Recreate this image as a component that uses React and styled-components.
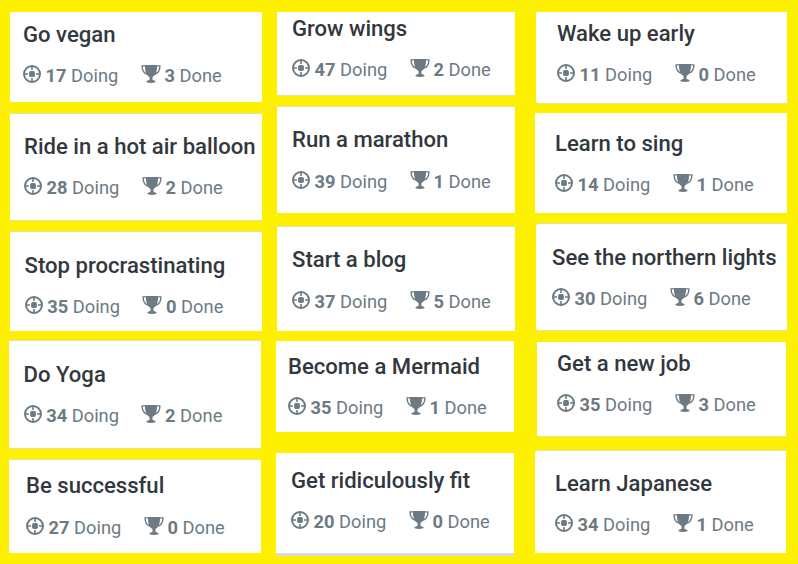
import React from 'react';
import styled, { createGlobalStyle } from 'styled-components';

const GlobalStyle = createGlobalStyle`
  body {
    margin: 0;
    background: #fdf000;
  }
`

const Board = styled.main`
  box-sizing: border-box;
  display: grid;
  grid-template-columns: 267px 258px 273px;
  width: 798px;
  height: 564px;
  overflow: hidden;
  background: #fdf000;
  font-family: Roboto, "Liberation Sans", sans-serif;
`

const Column = styled.section`
  display: flex;
  flex-direction: column;
  align-items: flex-start;
`

const Card = styled.article`
  box-sizing: border-box;
  flex: none;
  width: ${props => props.$width}px;
  height: ${props => props.$height}px;
  margin-top: ${props => props.$gap}px;
  margin-left: ${props => props.$left}px;
  padding: ${props => props.$padTop}px 0 0 ${props => props.$padLeft}px;
  background: #fff;
  border-radius: ${props => props.$radius || '0'};
  box-shadow: ${props => props.$edge || 'none'};
`

const Title = styled.h2`
  margin: 0 0 ${props => props.$space}px;
  color: #32383e;
  font-size: 22.1px;
  font-weight: 500;
  line-height: 24px;
  white-space: nowrap;
`

const Stats = styled.div`
  display: flex;
  height: 22px;
`

const Stat = styled.div`
  display: flex;
  width: ${props => props.$wide ? '117.7px' : 'auto'};
  color: #6c7b83;
  font-size: 18.3px;
  line-height: 22px;
  white-space: pre;
`

const Icon = styled.svg`
  flex: none;
  width: ${props => props.$width}px;
  height: 18px;
  margin-right: ${props => props.$space}px;
`

const Count = styled.strong`
  font-weight: 700;
`

// pale hairlines on the card edges
const top = '0 -1px #e6e3a0';
const bottom = '0 1px #e6e3a0';
const both = `${top}, ${bottom}`;

const columns = [
  [
    { title: 'Go vegan', doing: 17, done: 3, left: 10, gap: 12, width: 252, height: 90, padTop: 10, padLeft: 13 },
    { title: 'Ride in a hot air balloon', doing: 28, done: 2, left: 10, gap: 12, width: 252, height: 106, padTop: 20, padLeft: 14, edge: both },
    { title: 'Stop procrastinating', doing: 35, done: 0, left: 10, gap: 12, width: 252, height: 99, padTop: 21, padLeft: 14.6, edge: top },
    { title: 'Do Yoga', doing: 34, done: 2, left: 9, gap: 10, width: 252, height: 107, padTop: 21, padLeft: 14.6, edge: both },
    { title: 'Be successful', doing: 27, done: 0, left: 9, gap: 12, width: 252, height: 93, padTop: 13, padLeft: 17, space: 20, edge: top },
  ],
  [
    { title: 'Grow wings', doing: 47, done: 2, left: 10, gap: 12, width: 238, height: 83, padTop: 4, padLeft: 15, edge: bottom },
    { title: 'Run a marathon', doing: 39, done: 1, left: 10, gap: 12, width: 238, height: 106, padTop: 20, padLeft: 15, space: 20, edge: top },
    { title: 'Start a blog', doing: 37, done: 5, left: 10, gap: 14, width: 238, height: 104, padTop: 20, padLeft: 15, space: 20, edge: top },
    { title: 'Become a Mermaid', doing: 35, done: 1, left: 9, gap: 10, width: 238, height: 91, padTop: 13, padLeft: 12 },
    { title: 'Get ridiculously fit', doing: 20, done: 0, left: 9, gap: 21, width: 238, height: 100, padTop: 15, padLeft: 15, edge: '0 3px #dddbd9' },
  ],
  [
    { title: 'Wake up early', doing: 11, done: 0, left: 11, gap: 12, width: 251, height: 91, padTop: 9, padLeft: 21, radius: '0 0 0 3px', edge: bottom },
    { title: 'Learn to sing', doing: 14, done: 1, left: 10, gap: 10, width: 252, height: 100, padTop: 18, padLeft: 20 },
    { title: 'See the northern lights', doing: 30, done: 6, left: 11, gap: 11, width: 251, height: 106, padTop: 21, padLeft: 16, radius: '3px 0 0 3px', edge: both },
    { title: 'Get a new job', doing: 35, done: 3, left: 12, gap: 12, width: 249, height: 94, padTop: 9, padLeft: 20, radius: '0 0 0 3px', edge: bottom },
    { title: 'Learn Japanese', doing: 34, done: 1, left: 10, gap: 15, width: 251, height: 102, padTop: 20, padLeft: 20, radius: '3px 0 0 0', edge: top },
  ],
];

function TargetIcon() {
  return (
    <Icon $width={18} $space={4.6} viewBox="0 0 18 18" aria-hidden="true">
      <circle cx="9" cy="9" r="8" fill="none" stroke="currentColor" strokeWidth="2" />
      <path d="M9 1v4M9 13v4M1 9h4M13 9h4" stroke="currentColor" strokeWidth="1.6" />
      <rect x="6.1" y="6.1" width="5.8" height="5.8" rx="1.6" fill="currentColor" />
    </Icon>
  )
}

function TrophyIcon() {
  return (
    <Icon $width={20} $space={3.8} viewBox="0 0 20 18" aria-hidden="true">
      <path d="M4.5 .9H1.1c0 4.4 2 7.6 5.6 8.4M15.500 .9h3.400c0 4.400-2 7.600-5.600 8.400" fill="none" stroke="currentColor" strokeWidth="1.4" />
      <path d="M4 0h12v1.500c0 5.500-1.600 8.900-4.500 10.500v2.900c1.800.3 2.900.9 3.300 1.700 0 .9-1.700 1.400-4.800 1.400s-4.800-.5-4.800-1.400c.4-.8 1.500-1.400 3.300-1.700V12C5.600 10.400 4 7 4 1.500z" fill="currentColor" />
    </Icon>
  )
}

function Goal({ goal }) {
  return (
    <Card
      $width={goal.width}
      $height={goal.height}
      $gap={goal.gap}
      $left={goal.left}
      $padTop={goal.padTop}
      $padLeft={goal.padLeft}
      $radius={goal.radius}
      $edge={goal.edge}
    >
      <Title $space={goal.space || 19}>{goal.title}</Title>
      <Stats>
        <Stat $wide>
          <TargetIcon />
          <Count>{goal.doing}</Count> Doing
        </Stat>
        <Stat>
          <TrophyIcon />
          <Count>{goal.done}</Count> Done
        </Stat>
      </Stats>
    </Card>
  )
}

export default function App() {
  return (
    <>
      <GlobalStyle />
      <Board>
        {columns.map((goals, i) => (
          <Column key={i}>
            {goals.map(goal => <Goal key={goal.title} goal={goal} />)}
          </Column>
        ))}
      </Board>
    </>
  )
}
